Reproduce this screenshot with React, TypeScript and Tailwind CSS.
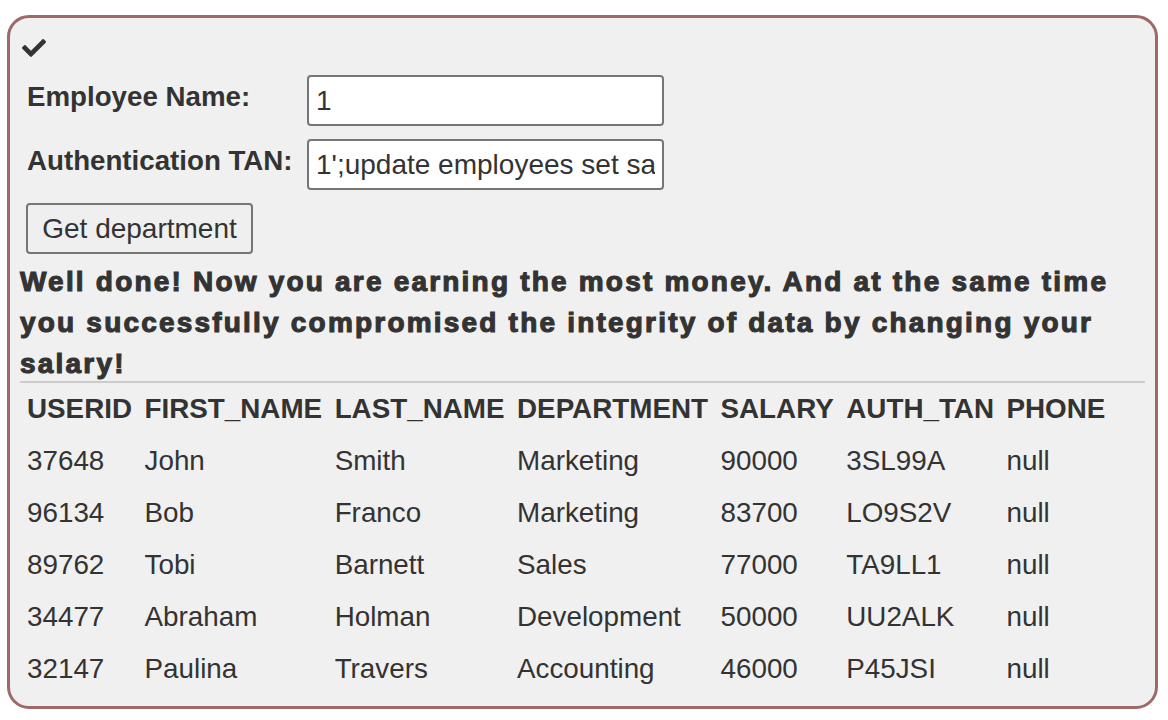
import { FaCheck } from 'react-icons/fa';

const rows = [
  ['37648', 'John', 'Smith', 'Marketing', '90000', '3SL99A', 'null'],
  ['96134', 'Bob', 'Franco', 'Marketing', '83700', 'LO9S2V', 'null'],
  ['89762', 'Tobi', 'Barnett', 'Sales', '77000', 'TA9LL1', 'null'],
  ['34477', 'Abraham', 'Holman', 'Development', '50000', 'UU2ALK', 'null'],
  ['32147', 'Paulina', 'Travers', 'Accounting', '46000', 'P45JSI', 'null'],
];

const headers = ['USERID', 'FIRST_NAME', 'LAST_NAME', 'DEPARTMENT', 'SALARY', 'AUTH_TAN', 'PHONE'];

export default function App() {
  return (
    <div className="bg-white pt-[15px] pb-[11px] pl-[7px] pr-[10px] font-['Liberation_Sans',Arial,sans-serif] text-[#333]">
      <div className="h-[694px] rounded-[22px] border-[3px] border-[#9e6a68] bg-[#f0f0f0] px-[10px]">
        <div className="pl-[2px] pt-[18px]">
          <FaCheck size={24} className="text-[#333]" />
        </div>

        <div className="mt-[15px] pl-[7px]">
          <div className="flex items-start">
            <label className="w-[280px] pt-[6px] text-[27.7px] font-bold leading-[32px]">Employee Name:</label>
            <input
              readOnly
              value="1"
              className="h-[51px] w-[357px] rounded-[4px] border-2 border-[#767676] bg-white px-[7px] text-[28px] text-[#333] outline-none"
            />
          </div>
          <div className="mt-[13px] flex items-start">
            <label className="w-[280px] pt-[6px] text-[27.7px] font-bold leading-[32px]">Authentication TAN:</label>
            <input
              readOnly
              value="1';update employees set salary=99999 where last_name='Smith"
              className="h-[51px] w-[357px] rounded-[4px] border-2 border-[#767676] bg-white px-[7px] text-[28px] text-[#333] outline-none"
            />
          </div>
          <button className="mt-[13px] ml-[-1px] h-[51px] w-[227px] rounded-[4px] border-2 border-[#767676] bg-[#efefef] text-[28px] text-[#333]">
            Get department
          </button>
        </div>

        <p className="mt-[7px] text-[28px] font-bold leading-[41px] tracking-[2.2px] [-webkit-text-stroke:1.1px_#333]">
          Well done! Now you are earning the most money. And at the same time you successfully compromised the
          integrity of data by changing your salary!
        </p>
        <div className="mt-[-3px] h-[2px] bg-[#cccccc]" />

        <table className="border-collapse text-[27.8px]">
          <thead>
            <tr>
              {headers.map((h) => (
                <th key={h} className="h-[52px] pl-[7px] pr-[5.5px] text-left font-bold">
                  {h}
                </th>
              ))}
            </tr>
          </thead>
          <tbody>
            {rows.map((r) => (
              <tr key={r[0]}>
                {r.map((c, i) => (
                  <td key={i} className="h-[52px] pl-[7px] pr-[5.5px]">
                    {c}
                  </td>
                ))}
              </tr>
            ))}
          </tbody>
        </table>
      </div>
    </div>
  );
}
